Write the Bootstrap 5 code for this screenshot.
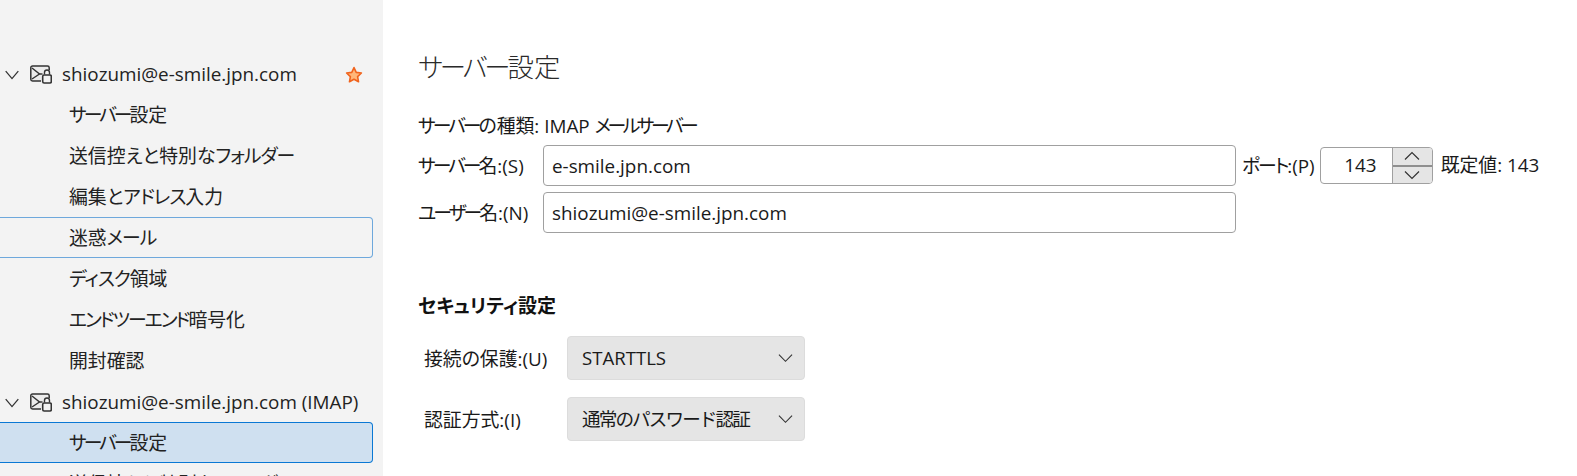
<!DOCTYPE html>
<html lang="ja">
<head>
<meta charset="utf-8">
<title>サーバー設定</title>
<link href="https://cdn.jsdelivr.net/npm/bootstrap@5.3.0/dist/css/bootstrap.min.css" rel="stylesheet">
<style>
html,body{height:476px;overflow:hidden;background:#fff}
body{font-family:"Open Sans","Noto Sans CJK JP",sans-serif;font-size:18.85px;color:#1a1a1a;font-feature-settings:"palt"}
.tk1{letter-spacing:-1px}
.tk2{letter-spacing:-2px}
.tk3{letter-spacing:-3px}
.tk4{letter-spacing:-3.5px}
.shell{height:476px;overflow:hidden}
.side{width:383px;flex:none;background:#f3f3f3;padding-top:53px;height:476px;overflow:hidden}
.acct{height:41px;color:#222;padding-top:2px}
.acct-chev{width:14px;margin-left:5px;margin-right:11px;flex:none}
.acct-mail{width:22px;height:19px;margin-right:10px;flex:none}
.acct-star{margin-left:auto;margin-right:20px;width:18px;height:18px}
.subitem{height:41px;line-height:40px;padding-left:69px;margin-right:10px;border:1px solid transparent;border-left:0;border-radius:0 4px 4px 0;color:#222}
.subitem.hoverish{border-color:#6ea8dc}
.subitem.picked{background:#cfe0f0;border-color:#0a78d4}
.pane{padding:44px 0 0 35px;min-width:0;flex:1}
.pane-title{font-size:26.4px;font-weight:300;line-height:46px;margin:0 0 22px;color:#2a2a2a;font-feature-settings:"palt"}
.typeline{line-height:28px;height:24px;margin-bottom:9px}
.frow{height:41px}
.frow+.frow{margin-top:6px}
.flabel{width:125px;flex:none;padding-top:2px}
.tbox.form-control{width:693px;height:41px;flex:none;border:1px solid #a0a0a0;border-radius:4px;font-size:18.85px;padding:0 8px;color:#1a1a1a;font-family:inherit}
.portlabel{margin-left:6px;margin-right:5px;padding-top:2px}
.spin{width:113px;height:37px;border:1px solid #a0a0a0;border-radius:4px;margin-right:8px;overflow:hidden;flex:none}
.spin-val{width:72px;text-align:right;padding-right:15px;line-height:35px;border-right:1px solid #a0a0a0}
.spin-btns{flex:1;background:#e5e5e5}
.spin-btn{flex:1;display:flex;align-items:center;justify-content:center}
.spin-btn+.spin-btn{border-top:2px solid #8f8f8f}
.sec-title{font-size:19px;font-weight:700;margin:61px 0 18px;line-height:24px;color:#111;font-feature-settings:"palt"}
.selrow{margin-left:6px}
.selrow+.selrow{margin-top:17px}
.sel-label{width:143px;flex:none;padding-top:2px}
.sel.form-select{width:238px;flex:none;height:44px;background-color:#e5e5e5;border:1px solid #dcdcdc;border-radius:4px;font-size:18.6px;padding:0 30px 0 14px;color:#1a1a1a;font-family:inherit;background-size:15px 10px;background-position:right 11px center;background-image:url("data:image/svg+xml,%3Csvg xmlns='http://www.w3.org/2000/svg' viewBox='0 0 16 10'%3E%3Cpath d='M1 1.5l7 7 7-7' fill='none' stroke='%23333' stroke-width='1.2'/%3E%3C/svg%3E")}
.sel.sel-tight{letter-spacing:-1.9px}
</style>
</head>
<body>
<div class="shell d-flex">
  <nav class="side">
    <div class="acct d-flex align-items-center">
      <svg class="acct-chev" viewBox="0 0 14 10"><path d="M.7 1.2 7 8.6l6.300-7.400" fill="none" stroke="#333" stroke-width="1.300"/></svg>
      <svg class="acct-mail" viewBox="0 0 22 19"><path d="M11 16H2.500A1.700 1.700 0 0 1 .8 14.300V2.700A1.700 1.700 0 0 1 2.500 1h15a1.700 1.700 0 0 1 1.700 1.700V5" fill="#ececec" stroke="#333" stroke-width="1.500"/><path d="M2 3 9.500 9 2 14" fill="none" stroke="#333" stroke-width="1.400"/><path d="M9.500 9h3" stroke="#333" stroke-width="1.400"/><path d="M14.500 9.500V7.500a2.500 2.500 0 0 1 5 0v2" fill="#f3f3f3" stroke="#333" stroke-width="1.400"/><rect x="12.700" y="10" width="8.600" height="8" rx="1.400" fill="#f3f3f3" stroke="#333" stroke-width="1.600"/></svg>
      <span>shiozumi@e-smile.jpn.com</span>
      <svg class="acct-star" viewBox="0 0 17 17"><path d="M8.500 1.500l2.100 4.500 4.900.6-3.600 3.400.9 4.900-4.300-2.400-4.300 2.400.9-4.900L1.500 6.600l4.900-.6z" fill="#ffb77a" stroke="#f0641e" stroke-width="1.500" stroke-linejoin="round"/></svg>
    </div>
    <div class="subitem"><span class="tk3">サーバー</span>設定</div>
    <div class="subitem">送信控えと特別な<span class="tk1">フォルダー</span></div>
    <div class="subitem">編集と<span class="tk1">アドレス</span>入力</div>
    <div class="subitem hoverish">迷惑<span class="tk1">メール</span></div>
    <div class="subitem"><span class="tk1">ディスク</span>領域</div>
    <div class="subitem"><span class="tk2">エンドツーエンド</span>暗号化</div>
    <div class="subitem">開封確認</div>
    <div class="acct d-flex align-items-center">
      <svg class="acct-chev" viewBox="0 0 14 10"><path d="M.7 1.2 7 8.6l6.300-7.400" fill="none" stroke="#333" stroke-width="1.300"/></svg>
      <svg class="acct-mail" viewBox="0 0 22 19"><path d="M11 16H2.500A1.700 1.700 0 0 1 .8 14.300V2.700A1.700 1.700 0 0 1 2.500 1h15a1.700 1.700 0 0 1 1.700 1.700V5" fill="#ececec" stroke="#333" stroke-width="1.500"/><path d="M2 3 9.500 9 2 14" fill="none" stroke="#333" stroke-width="1.400"/><path d="M9.500 9h3" stroke="#333" stroke-width="1.400"/><path d="M14.500 9.500V7.500a2.500 2.500 0 0 1 5 0v2" fill="#f3f3f3" stroke="#333" stroke-width="1.400"/><rect x="12.700" y="10" width="8.600" height="8" rx="1.400" fill="#f3f3f3" stroke="#333" stroke-width="1.600"/></svg>
      <span>shiozumi@e-smile.jpn.com (IMAP)</span>
    </div>
    <div class="subitem picked"><span class="tk3">サーバー</span>設定</div>
    <div class="subitem">送信控えと特別な<span class="tk1">フォルダー</span></div>
  </nav>
  <main class="pane">
    <h1 class="pane-title"><span class="tk3">サーバー</span>設定</h1>
    <div class="typeline"><span class="tk3">サーバー</span>の種類: IMAP <span class="tk4">メールサーバー</span></div>
    <div class="frow d-flex align-items-center">
      <label class="flabel"><span class="tk3">サーバー</span>名:(S)</label>
      <input class="tbox form-control" type="text" value="e-smile.jpn.com">
      <label class="portlabel"><span class="tk2">ポート</span>:(P)</label>
      <div class="spin d-flex">
        <div class="spin-val">143</div>
        <div class="spin-btns d-flex flex-column">
          <div class="spin-btn"><svg width="16" height="10" viewBox="0 0 16 10"><path d="M1 8.500l7-7 7 7" fill="none" stroke="#333" stroke-width="1.200"/></svg></div>
          <div class="spin-btn"><svg width="16" height="10" viewBox="0 0 16 10"><path d="M1 1.500l7 7 7-7" fill="none" stroke="#333" stroke-width="1.200"/></svg></div>
        </div>
      </div>
      <span class="text-nowrap">既定値: 143</span>
    </div>
    <div class="frow d-flex align-items-center">
      <label class="flabel"><span class="tk3">ユーザー</span>名:(N)</label>
      <input class="tbox form-control" type="text" value="shiozumi@e-smile.jpn.com">
    </div>
    <h2 class="sec-title">セキュリティ設定</h2>
    <div class="selrow d-flex align-items-center">
      <label class="sel-label">接続の保護:(U)</label>
      <select class="sel form-select"><option>STARTTLS</option></select>
    </div>
    <div class="selrow d-flex align-items-center">
      <label class="sel-label">認証方式:(I)</label>
      <select class="sel sel-tight form-select"><option>通常のパスワード認証</option></select>
    </div>
  </main>
</div>
</body>
</html>
